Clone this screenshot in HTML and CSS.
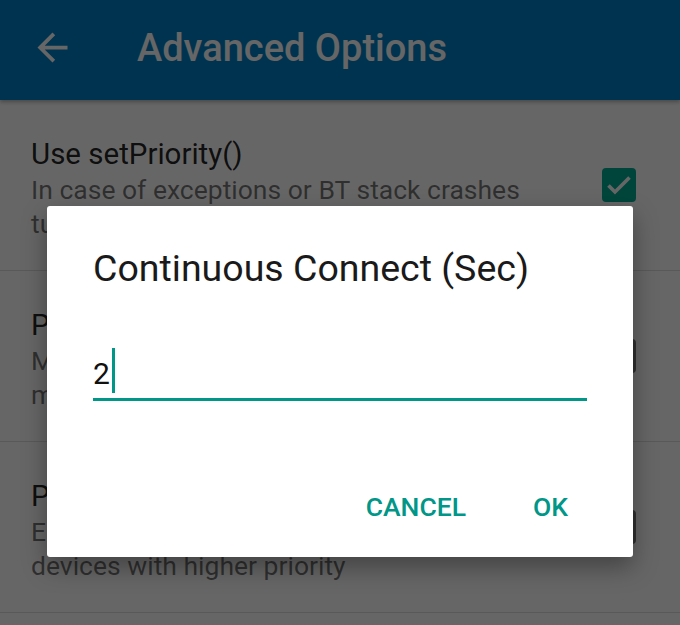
FILE: index.html
```html
<!DOCTYPE html>
<html lang="en">
<head>
<meta charset="utf-8">
<title>Advanced Options</title>
<link rel="stylesheet" href="styles.css">
</head>
<body>
<div class="app">
  <header class="toolbar">
    <svg class="back" viewBox="0 0 24 24" width="45" height="45" aria-hidden="true"><path d="M20 11H7.83l5.59-5.59L12 4l-8 8 8 8 1.41-1.41L7.83 13H20v-2z"/></svg>
    <h1 class="toolbar-title">Advanced Options</h1>
  </header>
  <main class="prefs">
    <div class="pref">
      <div class="pref-text">
        <div class="pref-title">Use setPriority()</div>
        <div class="pref-summary">In case of exceptions or BT stack crashes turn this option off</div>
      </div>
      <span class="check checked"><svg viewBox="0 0 28 28" width="28" height="28"><path d="M3.5 14.5l6.5 6.5L24.5 6.5" /></svg></span>
    </div>
    <div class="pref">
      <div class="pref-text">
        <div class="pref-title">Prefer media devices</div>
        <div class="pref-summary">Make the connection attempts to paired media devices only</div>
      </div>
      <span class="check"></span>
    </div>
    <div class="pref">
      <div class="pref-text">
        <div class="pref-title">Priority connect</div>
        <div class="pref-summary">Establish the connection first for the devices with higher priority</div>
      </div>
      <span class="check"></span>
    </div>
  </main>
  <div class="scrim"></div>
  <div class="dialog" role="dialog">
    <h2 class="dialog-title">Continuous Connect (Sec)</h2>
    <div class="field"><span class="value">2</span><span class="caret"></span></div>
    <div class="actions">
      <span class="btn">CANCEL</span>
      <span class="btn">OK</span>
    </div>
  </div>
</div>
</body>
</html>
```
FILE: styles.css
```css
html, body {
  margin: 0;
  padding: 0;
}
body {
  width: 680px;
  height: 625px;
  overflow: hidden;
  background: #ffffff;
  font-family: Roboto, "Noto Sans", "Liberation Sans", sans-serif;
}
.app {
  position: relative;
  width: 680px;
  height: 625px;
  overflow: hidden;
}
.toolbar {
  height: 100px;
  box-sizing: border-box;
  background: #0281c6;
  display: flex;
  align-items: center;
  padding: 0 0 6px 30px;
  box-shadow: 0 2px 4px rgba(0,0,0,0.3);
  position: relative;
  z-index: 1;
}
.back {
  display: block;
  fill: #ffffff;
  flex: none;
}
.toolbar-title {
  margin: 2px 0 0 62px;
  font-size: 38px;
  font-weight: 500;
  color: #ffffff;
  line-height: 44px;
}
.prefs {
  display: flex;
  flex-direction: column;
}
.pref {
  height: 171px;
  box-sizing: border-box;
  border-bottom: 1px solid #dedede;
  display: flex;
  align-items: center;
  padding: 0 44px 0 31px;
  gap: 20px;
}
.pref-text {
  flex: 1;
  min-width: 0;
  margin-top: 6px;
}
.pref-title {
  font-size: 29.5px;
  line-height: 38px;
  color: rgba(0,0,0,0.87);
}
.pref-summary {
  max-width: 500px;
  font-size: 26.5px;
  line-height: 34px;
  color: rgba(0,0,0,0.54);
}
.check {
  flex: none;
  width: 34px;
  height: 34px;
  box-sizing: border-box;
  border: 3px solid rgba(0,0,0,0.54);
  border-radius: 4px;
  display: flex;
  align-items: center;
  justify-content: center;
}
.check.checked {
  background: #00ac93;
  border-color: #00ac93;
}
.check svg {
  display: block;
  fill: none;
  stroke: #ffffff;
  stroke-width: 3.6;
}
.scrim {
  position: absolute;
  inset: 0;
  background: rgba(0,0,0,0.6);
  z-index: 2;
}
.dialog {
  position: absolute;
  left: 47px;
  top: 206px;
  width: 586px;
  height: 351px;
  box-sizing: border-box;
  background: #ffffff;
  border-radius: 3px;
  box-shadow: 0 10px 24px rgba(0,0,0,0.35);
  z-index: 3;
  padding: 42px 46px 35px 46px;
  display: flex;
  flex-direction: column;
}
.dialog-title {
  margin: 0;
  font-size: 37.5px;
  font-weight: 400;
  line-height: 40px;
  color: #1a1a1a;
}
.field {
  margin-top: 62px;
  height: 45px;
  padding-bottom: 3px;
  border-bottom: 3px solid #009688;
  display: flex;
  align-items: flex-start;
}
.value {
  font-size: 30px;
  line-height: 48px;
  color: #111111;
}
.caret {
  width: 3px;
  height: 45px;
  margin-left: 2px;
  margin-top: -2px;
  background: #009688;
}
.actions {
  margin-top: 91px;
  display: flex;
  justify-content: flex-end;
  gap: 67px;
  padding-right: 19px;
}
.btn {
  font-size: 26.5px;
  font-weight: 500;
  line-height: 30px;
  color: #009688;
}
```
